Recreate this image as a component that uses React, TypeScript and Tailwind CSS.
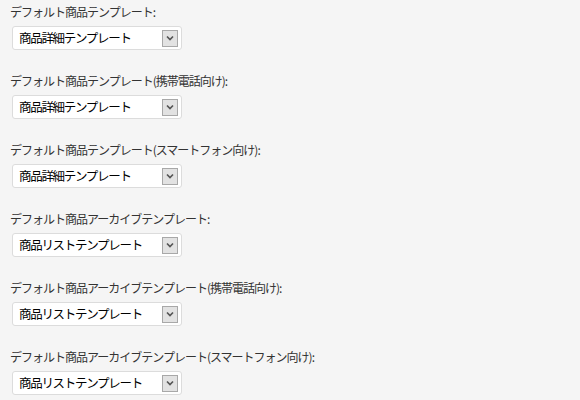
import React from 'react';

const ROWS = [
  { label: 'デフォルト商品テンプレート:', value: '商品詳細テンプレート' },
  { label: 'デフォルト商品テンプレート(携帯電話向け):', value: '商品詳細テンプレート' },
  { label: 'デフォルト商品テンプレート(スマートフォン向け):', value: '商品詳細テンプレート' },
  { label: 'デフォルト商品アーカイブテンプレート:', value: '商品リストテンプレート' },
  { label: 'デフォルト商品アーカイブテンプレート(携帯電話向け):', value: '商品リストテンプレート' },
  { label: 'デフォルト商品アーカイブテンプレート(スマートフォン向け):', value: '商品リストテンプレート' },
];

const FakeSelect = ({ value }: { value: string }) => (
  <div className="flex items-center justify-between w-[170px] h-[24px] bg-white border border-[#dcdcdc] rounded-[3px] pl-[6px] pr-[3px]">
    <span className="text-[12.5px] leading-none tracking-[-1.3px] font-normal text-black">{value}</span>
    <span className="flex items-center justify-center w-[16px] h-[17px] bg-[#e2e2e2] border border-[#a8a8a8]">
      <svg width="8" height="6" viewBox="0 0 8 6">
        <path d="M1 1.5 L4 4.5 L7 1.5" fill="none" stroke="#555" strokeWidth="1.7" />
      </svg>
    </span>
  </div>
);

export default function App() {
  return (
    <div
      className="w-[580px] h-[400px] bg-[#f5f5f5] pl-[10px] pt-[4px]"
      style={{ fontFamily: '"Noto Sans CJK JP", sans-serif' }}
    >
      {ROWS.map((row, i) => (
        <div key={i} className="h-[69px]">
          <div className="text-[12px] leading-[16px] tracking-[-1px] text-[#333]">{row.label}</div>
          <div className="mt-[6px] ml-[2px]">
            <FakeSelect value={row.value} />
          </div>
        </div>
      ))}
    </div>
  );
}
